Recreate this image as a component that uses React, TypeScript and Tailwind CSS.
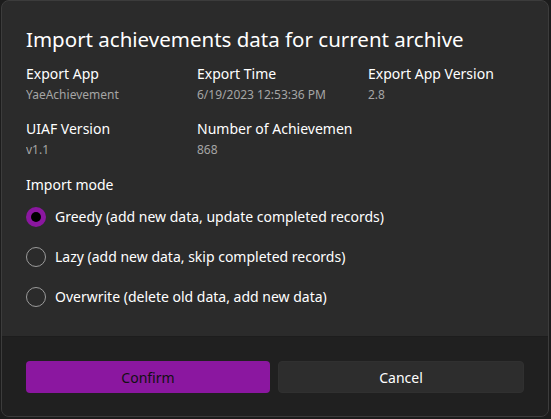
import { useState } from "react";

const info = [
  { label: "Export App", value: "YaeAchievement" },
  { label: "Export Time", value: "6/19/2023 12:53:36 PM" },
  { label: "Export App Version", value: "2.8" },
  { label: "UIAF Version", value: "v1.1" },
  { label: "Number of Achievements", value: "868" },
];

const modes = [
  "Greedy (add new data, update completed records)",
  "Lazy (add new data, skip completed records)",
  "Overwrite (delete old data, add new data)",
];

function Radio({ checked }: { checked: boolean }) {
  if (checked)
    return (
      <span className="flex h-5 w-5 shrink-0 items-center justify-center rounded-full bg-[#8b17a0]">
        <span className="h-[10px] w-[10px] rounded-full bg-black" />
      </span>
    );
  return <span className="h-5 w-5 shrink-0 rounded-full border border-[#9b9b9b]" />;
}

export default function App() {
  const [mode, setMode] = useState(0);
  return (
    <div
      className="h-[419px] w-[551px] overflow-hidden bg-[#1c1c1c] pl-[1px] pr-[2px] pb-[2px]"
      style={{ fontFamily: '"Noto Sans", "Open Sans", sans-serif' }}
    >
      <div className="flex h-full flex-col overflow-hidden rounded-b-lg rounded-t-lg border border-[#3c3c3c] bg-[#2b2b2b]">
        <div className="flex-1 px-6 pt-6">
          <h1 className="text-[20.5px] leading-7 text-white">
            Import achievements data for current archive
          </h1>
          <div className="mt-[11px] grid grid-cols-[155px_155px_155px] gap-x-4 gap-y-4">
            {info.map((i) => (
              <div key={i.label} className="overflow-hidden">
                <div className="whitespace-nowrap text-[14px] leading-5 text-white">{i.label}</div>
                <div className="mt-[3px] whitespace-nowrap text-[12px] leading-4 text-[#a5a5a5]">
                  {i.value}
                </div>
              </div>
            ))}
          </div>
          <div className="mt-[17px] text-[14px] leading-5 text-white">Import mode</div>
          <div className="mt-[12px] flex flex-col gap-5">
            {modes.map((m, i) => (
              <button
                key={m}
                onClick={() => setMode(i)}
                className="flex items-center gap-[9px] text-left text-[14px] leading-5 text-white"
              >
                <Radio checked={mode === i} />
                <span>{m}</span>
              </button>
            ))}
          </div>
        </div>
        <div className="flex h-[80px] gap-2 border-t border-[#1d1d1d] bg-[#202020] px-6 pt-6">
          <button className="h-8 flex-1 rounded-[4px] bg-[#8b17a0] text-[14px] text-[#111]">
            Confirm
          </button>
          <button className="h-8 flex-1 rounded-[4px] border border-[#303030] bg-[#2d2d2d] text-[14px] text-white">
            Cancel
          </button>
        </div>
      </div>
    </div>
  );
}
